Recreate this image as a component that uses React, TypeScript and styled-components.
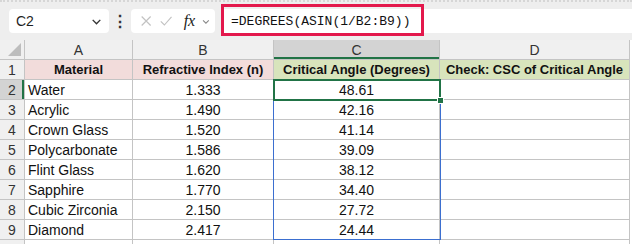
import React from 'react';
import styled, { createGlobalStyle } from 'styled-components';

const GlobalStyle = createGlobalStyle`
  html, body {
    margin: 0;
    padding: 0;
    background: #ffffff;
  }
  * {
    box-sizing: border-box;
  }
`;

const Page = styled.div`
  width: 632px;
  height: 244px;
  overflow: hidden;
  background: #ffffff;
  font-family: "Liberation Sans", Arial, sans-serif;
`;

const Toolbar = styled.div`
  height: 40px;
  display: flex;
  align-items: flex-start;
  padding: 9px 0 0 9px;
  background: #eeeeee;
  border-top: 2px dotted #d6d6d6;
`;

const NameBox = styled.div`
  width: 100px;
  height: 24px;
  margin-top: -2px;
  background: #ffffff;
  border-radius: 4px;
  display: flex;
  align-items: center;
  justify-content: space-between;
  padding: 0 6px 0 7px;
  font-size: 14px;
  color: #1f1f1f;
`;

const Dots = styled.div`
  width: 22px;
  height: 24px;
  margin-top: -2px;
  display: flex;
  align-items: center;
  justify-content: center;
  font-size: 16px;
  font-weight: bold;
  color: #333;
`;

const FxBox = styled.div`
  width: 84px;
  height: 24px;
  margin-top: -2px;
  background: #ffffff;
  border-radius: 4px;
  display: flex;
  align-items: center;
  padding: 0 4px 0 8px;
  gap: 6px;
`;

const Fx = styled.span`
  font-family: "Liberation Serif", "Times New Roman", serif;
  font-style: italic;
  font-size: 16px;
  color: #222;
  margin-left: 4px;
`;

const FormulaInput = styled.div`
  position: relative;
  flex: 1;
  height: 24px;
  margin-top: -2px;
  margin-left: 7px;
  background: #ffffff;
  display: flex;
  align-items: center;
  padding-left: 9px;
  font-family: "Liberation Mono", "Courier New", monospace;
  font-size: 13px;
  color: #111;
`;

const Highlight = styled.div`
  position: absolute;
  left: -1px;
  top: -5px;
  width: 203px;
  height: 32px;
  border: 3px solid #e3184c;
`;

const Sheet = styled.div`
  display: grid;
  grid-template-columns: 25px 108px 141px 166px 190px;
  grid-auto-rows: 20px;
  position: relative;
`;

const Cell = styled.div<{ $fill?: string; $align?: string; $bold?: boolean }>`
  border-right: 1px solid #c4c4c4;
  border-bottom: 1px solid #c4c4c4;
  background: ${p => p.$fill || '#ffffff'};
  font-size: ${p => (p.$bold ? '13px' : '14px')};
  font-weight: ${p => (p.$bold ? 700 : 400)};
  color: #111;
  display: flex;
  align-items: center;
  justify-content: ${p => p.$align || 'flex-start'};
  padding: 0 3px;
  white-space: nowrap;
  overflow: hidden;
  position: relative;
`;

const Head = styled.div<{ $active?: boolean; $side?: 'col' | 'row' }>`
  background: ${p => (p.$active ? '#d3d3d3' : '#f0f0f0')};
  border-right: 1px solid #c4c4c4;
  border-bottom: 1px solid #c4c4c4;
  font-size: 14px;
  color: #333;
  display: flex;
  align-items: center;
  justify-content: center;
  box-shadow: ${p =>
    p.$active
      ? p.$side === 'col'
        ? 'inset 0 -2px 0 #217346'
        : 'inset -2px 0 0 #217346'
      : 'none'};
`;

const Corner = styled.div`
  background: #f0f0f0;
  border-right: 1px solid #c4c4c4;
  border-bottom: 1px solid #c4c4c4;
  display: flex;
  align-items: flex-end;
  justify-content: flex-end;
  padding: 0 3px 3px 0;
`;

const ActiveCell = styled.div`
  position: absolute;
  left: 273px;
  top: 39px;
  width: 168px;
  height: 22px;
  border: 2px solid #217346;
  pointer-events: none;
`;

const FillHandle = styled.div`
  position: absolute;
  right: -5px;
  bottom: -5px;
  width: 7px;
  height: 7px;
  background: #217346;
  border: 1px solid #ffffff;
`;

const Range = styled.div`
  position: absolute;
  left: 273px;
  top: 60px;
  width: 168px;
  height: 140px;
  border: 1px solid #3b6fd0;
  border-top: none;
  pointer-events: none;
`;

const Chevron = ({ size = 12, color = '#444' }: { size?: number; color?: string }) => (
  <svg width={size} height={size} viewBox="0 0 12 12">
    <path d="M2.5 4.5 L6 8 L9.5 4.5" fill="none" stroke={color} strokeWidth="1.3" />
  </svg>
);

const rows = [
  ['Water', '1.333', '48.61'],
  ['Acrylic', '1.490', '42.16'],
  ['Crown Glass', '1.520', '41.14'],
  ['Polycarbonate', '1.586', '39.09'],
  ['Flint Glass', '1.620', '38.12'],
  ['Sapphire', '1.770', '34.40'],
  ['Cubic Zirconia', '2.150', '27.72'],
  ['Diamond', '2.417', '24.44'],
];

const PINK = '#f2dcdb';
const GREEN = '#d8e4bc';

export default function App() {
  return (
    <Page>
      <GlobalStyle />
      <Toolbar>
        <NameBox>
          <span>C2</span>
          <Chevron size={13} color="#333" />
        </NameBox>
        <Dots>⋮</Dots>
        <FxBox>
          <svg width="16" height="16" viewBox="0 0 16 16">
            <path d="M3 3 L13 13 M13 3 L3 13" stroke="#c2c2c2" strokeWidth="1.3" />
          </svg>
          <svg width="16" height="16" viewBox="0 0 16 16">
            <path d="M2 8.5 L6 12.5 L14 3.5" fill="none" stroke="#c2c2c2" strokeWidth="1.3" />
          </svg>
          <Fx>fx</Fx>
          <Chevron size={11} color="#888" />
        </FxBox>
        <FormulaInput>
          =DEGREES(ASIN(1/B2:B9))
          <Highlight />
        </FormulaInput>
      </Toolbar>
      <Sheet>
        <Corner>
          <svg width="13" height="13" viewBox="0 0 13 13">
            <polygon points="13,0 13,13 0,13" fill="#bdbdbd" />
          </svg>
        </Corner>
        <Head>A</Head>
        <Head>B</Head>
        <Head $active $side="col">C</Head>
        <Head>D</Head>

        <Head>1</Head>
        <Cell $fill={PINK} $align="center" $bold>Material</Cell>
        <Cell $fill={PINK} $align="center" $bold>Refractive Index (n)</Cell>
        <Cell $fill={GREEN} $align="center" $bold>Critical Angle (Degrees)</Cell>
        <Cell $fill={GREEN} $align="center" $bold>Check: CSC of Critical Angle</Cell>

        {rows.map((r, i) => (
          <React.Fragment key={r[0]}>
            <Head $active={i === 0} $side="row">{i + 2}</Head>
            <Cell>{r[0]}</Cell>
            <Cell $align="center">{r[1]}</Cell>
            <Cell $align="center">{r[2]}</Cell>
            <Cell />
          </React.Fragment>
        ))}
        <Head />
        <Cell />
        <Cell />
        <Cell />
        <Cell />

        <Range />
        <ActiveCell>
          <FillHandle />
        </ActiveCell>
      </Sheet>
    </Page>
  );
}
